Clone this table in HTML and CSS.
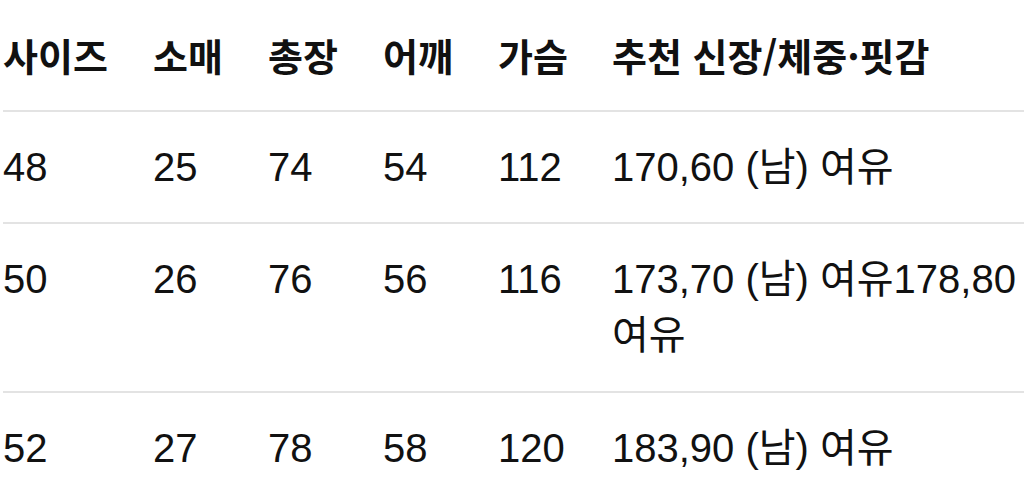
FILE: index.html
```html
<!DOCTYPE html>
<html lang="ko">
<head>
<meta charset="utf-8">
<link rel="stylesheet" href="styles.css">
</head>
<body>
<table class="size-table">
  <colgroup>
    <col class="c1"><col class="c2"><col class="c3"><col class="c4"><col class="c5"><col class="c6">
  </colgroup>
  <thead>
    <tr><th>사이즈</th><th>소매</th><th>총장</th><th>어깨</th><th>가슴</th><th>추천 신장/체중·핏감</th></tr>
  </thead>
  <tbody>
    <tr><td>48</td><td>25</td><td>74</td><td>54</td><td>112</td><td>170,60 (남) 여유</td></tr>
    <tr><td>50</td><td>26</td><td>76</td><td>56</td><td>116</td><td>173,70 (남) 여유178,80 여유</td></tr>
    <tr><td>52</td><td>27</td><td>78</td><td>58</td><td>120</td><td>183,90 (남) 여유</td></tr>
  </tbody>
</table>
</body>
</html>
```
FILE: styles.css
```css
html, body {
  margin: 0;
  padding: 0;
  background: #ffffff;
  overflow: hidden;
}
body {
  font-family: "Liberation Sans", "Noto Sans CJK KR", sans-serif;
  color: #111111;
}
.size-table {
  margin-left: 3px;
  width: 1060px;
  table-layout: fixed;
  border-collapse: collapse;
  border-spacing: 0;
}
.c1 { width: 150px; }
.c2 { width: 115px; }
.c3 { width: 115px; }
.c4 { width: 115px; }
.c5 { width: 114px; }
.c6 { width: 451px; }
.size-table th,
.size-table td {
  font-size: 40px;
  line-height: 56px;
  padding: 27px 0;
  text-align: left;
  vertical-align: top;
  word-break: keep-all;
  border-bottom: 2px solid #e3e3e3;
}
.size-table th {
  font-size: 38px;
  font-weight: 700;
  font-family: "Noto Sans CJK KR", sans-serif;
}
.size-table tbody tr:nth-child(2) td {
  padding-bottom: 28px;
}
.size-table td:last-child {
  padding-right: 40px;
}
```
